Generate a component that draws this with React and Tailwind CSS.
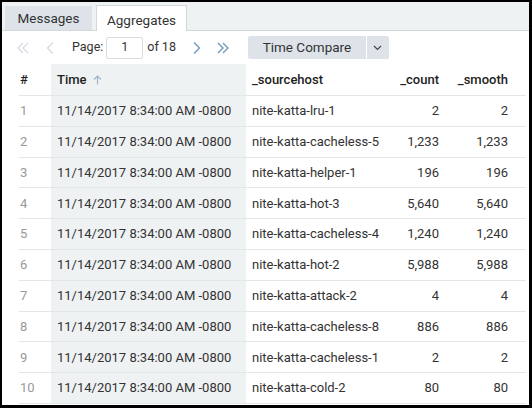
import React from "react";

const rows = [
  ["1", "nite-katta-lru-1", "2", "2"],
  ["2", "nite-katta-cacheless-5", "1,233", "1,233"],
  ["3", "nite-katta-helper-1", "196", "196"],
  ["4", "nite-katta-hot-3", "5,640", "5,640"],
  ["5", "nite-katta-cacheless-4", "1,240", "1,240"],
  ["6", "nite-katta-hot-2", "5,988", "5,988"],
  ["7", "nite-katta-attack-2", "4", "4"],
  ["8", "nite-katta-cacheless-8", "886", "886"],
  ["9", "nite-katta-cacheless-1", "2", "2"],
  ["10", "nite-katta-cold-2", "80", "80"],
];

function DoubleChevronLeft({ color }) {
  return (
    <svg width="14" height="14" viewBox="0 0 14 14" fill="none" stroke={color} strokeWidth="1.4">
      <path d="M7 2 L2 7 L7 12" />
      <path d="M12 2 L7 7 L12 12" />
    </svg>
  );
}
function DoubleChevronRight({ color }) {
  return (
    <svg width="14" height="14" viewBox="0 0 14 14" fill="none" stroke={color} strokeWidth="1.4">
      <path d="M2 2 L7 7 L2 12" />
      <path d="M7 2 L12 7 L7 12" />
    </svg>
  );
}
function ChevronLeft({ color }) {
  return (
    <svg width="8" height="14" viewBox="0 0 8 14" fill="none" stroke={color} strokeWidth="1.4">
      <path d="M7 1.5 L1.5 7 L7 12.5" />
    </svg>
  );
}
function ChevronRight({ color }) {
  return (
    <svg width="8" height="14" viewBox="0 0 8 14" fill="none" stroke={color} strokeWidth="1.4">
      <path d="M1 1.5 L6.5 7 L1 12.5" />
    </svg>
  );
}

export default function App() {
  return (
    <div
      className="w-[532px] h-[408px] bg-black pt-[2px] pl-[2px] pr-[3px] pb-[3px]"
      style={{ fontFamily: "Roboto, 'Noto Sans', sans-serif" }}
    >
      <div className="w-full h-full bg-white flex flex-col overflow-hidden">
        {/* Tab bar */}
        <div className="h-[29px] bg-[#eff2f3] border-b border-[#d3d8db] flex items-end pl-[3px] gap-[4px] shrink-0">
          <div className="h-[25px] w-[87px] bg-[#dde3e8] flex items-center justify-center text-[13.5px] text-[#333] mb-[-1px] border-b border-[#d3d8db]">
            Messages
          </div>
          <div className="h-[26px] w-[91px] bg-white border border-b-0 border-[#d3d8db] flex items-center justify-center text-[13.5px] text-[#333] mb-[-1px] pt-[3px]">
            Aggregates
          </div>
        </div>

        {/* Pager */}
        <div className="h-[33px] flex items-center shrink-0 pl-[14px] text-[12.5px] text-[#333]">
          <DoubleChevronLeft color="#d5dde3" />
          <span className="ml-[16px] flex">
            <ChevronLeft color="#d5dde3" />
          </span>
          <span className="ml-[18px]">Page:</span>
          <div className="ml-[3px] w-[37px] h-[22px] border border-[#d8dcdf] rounded-[2px] flex items-center justify-center">
            1
          </div>
          <span className="ml-[4px]">of 18</span>
          <span className="ml-[17px] flex">
            <ChevronRight color="#6f9bbd" />
          </span>
          <span className="ml-[15px] flex">
            <DoubleChevronRight color="#6f9bbd" />
          </span>
          <div className="ml-[18px] h-[23px] w-[118px] bg-[#dde3e8] rounded-l-[2px] flex items-center justify-center text-[13.5px] text-[#333]">
            Time Compare
          </div>
          <div className="ml-[1px] h-[23px] w-[22px] bg-[#dde3e8] rounded-r-[2px] flex items-center justify-center">
            <svg width="9" height="6" viewBox="0 0 9 6" fill="none" stroke="#444" strokeWidth="1.2">
              <path d="M1 1 L4.5 4.5 L8 1" />
            </svg>
          </div>
        </div>

        {/* Table */}
        <div className="ml-[17px] w-[507px] text-[13px] whitespace-nowrap">
          <div className="flex h-[32px] border-b border-[#e4e7e9] items-center font-medium text-[#222]">
            <div className="w-[32px] pl-[1px] h-full flex items-center">#</div>
            <div className="w-[195px] h-full bg-[#eff2f3] flex items-center pl-[6px]">
              Time
              <svg className="ml-[6px]" width="9" height="10" viewBox="0 0 9 10" fill="none" stroke="#9fb5c6" strokeWidth="1.2">
                <path d="M4.5 9.5 V1" />
                <path d="M1 4.5 L4.5 1 L8 4.5" />
              </svg>
            </div>
            <div className="w-[138px] pl-[6px] h-full flex items-center">_sourcehost</div>
            <div className="w-[61px] pr-[6px] h-full flex items-center justify-end">_count</div>
            <div className="w-[81px] pr-[18px] h-full flex items-center justify-end">_smooth</div>
          </div>
          {rows.map((r) => (
            <div key={r[0]} className="flex h-[30.8px] border-b border-[#e4e7e9] items-center text-[#333]">
              <div className="w-[32px] pl-[1px] h-full flex items-center text-[#999]">{r[0]}</div>
              <div className="w-[195px] h-full bg-[#eff2f3] flex items-center pl-[6px]">
                11/14/2017 8:34:00 AM -0800
              </div>
              <div className="w-[138px] pl-[6px] h-full flex items-center">{r[1]}</div>
              <div className="w-[61px] pr-[6px] h-full flex items-center justify-end">{r[2]}</div>
              <div className="w-[81px] pr-[18px] h-full flex items-center justify-end">{r[3]}</div>
            </div>
          ))}
        </div>
      </div>
    </div>
  );
}
